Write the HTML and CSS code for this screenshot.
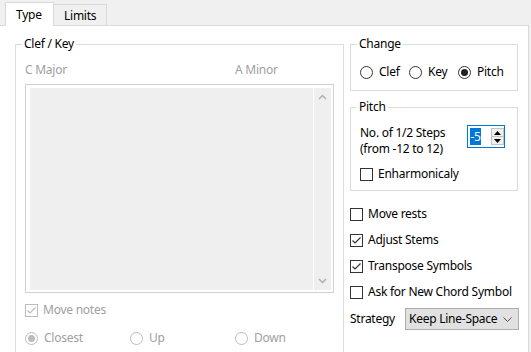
FILE: index.html
```html
<!DOCTYPE html>
<html>
<head>
<meta charset="utf-8">
<link rel="stylesheet" href="styles.css">
</head>
<body>
<div class="tabs">
  <div class="tab active">Type</div>
  <div class="tab">Limits</div>
</div>
<div class="page">
  <fieldset class="group clef">
    <legend>Clef / Key</legend>
    <div class="keys"><span>C Major</span><span>A Minor</span></div>
    <div class="listbox">
      <div class="list-area"></div>
      <div class="scrollbar">
        <svg width="9" height="6" viewBox="0 0 9 6"><path d="M1 5 L4.5 1.5 L8 5" fill="none" stroke="#b0b0b0" stroke-width="1.5"/></svg>
        <svg width="9" height="6" viewBox="0 0 9 6"><path d="M1 1 L4.5 4.5 L8 1" fill="none" stroke="#b0b0b0" stroke-width="1.5"/></svg>
      </div>
    </div>
    <div class="check disabled move-notes">
      <span class="box"><svg width="11" height="11" viewBox="0 0 11 11"><path d="M1.5 5.5 L4 8 L9.5 2.5" fill="none" stroke="#bcbcbc" stroke-width="1.2"/></svg></span>
      <span>Move notes</span>
    </div>
    <div class="dir-row disabled">
      <div class="radio-item"><span class="radio checked"><span class="dot"></span></span><span>Closest</span></div>
      <div class="radio-item"><span class="radio"></span><span>Up</span></div>
      <div class="radio-item"><span class="radio"></span><span>Down</span></div>
    </div>
  </fieldset>

  <div class="right">
    <fieldset class="group change">
      <legend>Change</legend>
      <div class="change-row">
        <div class="radio-item"><span class="radio"></span><span>Clef</span></div>
        <div class="radio-item"><span class="radio"></span><span>Key</span></div>
        <div class="radio-item"><span class="radio checked"><span class="dot"></span></span><span>Pitch</span></div>
      </div>
    </fieldset>

    <fieldset class="group pitch">
      <legend>Pitch</legend>
      <div class="steps">
        <div class="steps-text"><div>No. of 1/2 Steps</div><div>(from -12 to 12)</div></div>
        <div class="spin">
          <span class="sel">-5</span>
          <div class="spin-btns">
            <span class="spin-btn up"><svg width="7" height="4" viewBox="0 0 7 4"><path d="M3.5 0 L7 4 H0 Z" fill="#000"/></svg></span>
            <span class="spin-btn down"><svg width="7" height="4" viewBox="0 0 7 4"><path d="M0 0 H7 L3.5 4 Z" fill="#000"/></svg></span>
          </div>
        </div>
      </div>
      <div class="check enh">
        <span class="box"></span>
        <span>Enharmonicaly</span>
      </div>
    </fieldset>

    <div class="checks">
      <div class="check"><span class="box"></span><span>Move rests</span></div>
      <div class="check"><span class="box"><svg width="11" height="11" viewBox="0 0 11 11"><path d="M1.5 5.5 L4 8 L9.5 2.5" fill="none" stroke="#333" stroke-width="1.2"/></svg></span><span>Adjust Stems</span></div>
      <div class="check"><span class="box"><svg width="11" height="11" viewBox="0 0 11 11"><path d="M1.5 5.5 L4 8 L9.5 2.5" fill="none" stroke="#333" stroke-width="1.2"/></svg></span><span>Transpose Symbols</span></div>
      <div class="check"><span class="box"></span><span>Ask for New Chord Symbol</span></div>
    </div>

    <div class="strategy">
      <span>Strategy</span>
      <div class="select">
        <span>Keep Line-Space</span>
        <svg width="9" height="5" viewBox="0 0 9 5"><path d="M0.5 0.5 L4.5 4.5 L8.5 0.5" fill="none" stroke="#505050"/></svg>
      </div>
    </div>
  </div>
</div>
</body>
</html>
```

FILE: styles.css
```css
* { box-sizing: border-box; }

html, body {
  margin: 0;
}

body {
  width: 531px;
  height: 352px;
  overflow: hidden;
  background: #f0f0f0;
  font-family: "Noto Sans", sans-serif;
  font-size: 12px;
  line-height: 16px;
  letter-spacing: -0.25px;
  color: #000;
}

/* Tabs */
.tabs {
  display: flex;
  align-items: flex-end;
  height: 25px;
  padding-left: 5px;
}

.tab {
  border: 1px solid #d9d9d9;
  border-bottom: none;
  background: #f0f0f0;
  height: 21px;
  width: 54px;
  margin-left: -1px;
  padding: 3px 0 0 10px;
}

.tab.active {
  position: relative;
  z-index: 1;
  background: #fff;
  width: 49px;
  height: 24px;
  margin-left: 0;
  margin-bottom: -1px;
  padding-top: 4px;
}

/* Page */
.page {
  width: 529px;
  height: 327px;
  background: #fff;
  border-top: 1px solid #d9d9d9;
  border-right: 1px solid #d9d9d9;
  display: flex;
  align-items: flex-start;
  gap: 6px;
  padding: 10px 0 0 15px;
}

.group {
  margin: 0;
  min-width: 0;
  border: 1px solid #dcdcdc;
  padding: 0 9px;
}

.group > legend {
  padding: 0 2px;
  margin-left: -3px;
  line-height: 16px;
}

.clef {
  width: 329px;
  height: 340px;
}

.keys {
  display: grid;
  grid-template-columns: 210px auto;
  margin-top: 10px;
  color: #a0a0a0;
}

.listbox {
  margin-top: 6px;
  height: 209px;
  border: 1px solid #d0d0d0;
  padding: 3px 2px 2px 4px;
  display: flex;
  gap: 1px;
}

.list-area {
  flex: 1;
  background: #efefef;
}

.scrollbar {
  width: 17px;
  background: #efefef;
  display: flex;
  flex-direction: column;
  justify-content: space-between;
  align-items: center;
  padding: 6px 0 6px;
}

.scrollbar svg { display: block; }

/* Checkboxes */
.check {
  display: flex;
  align-items: center;
  gap: 5px;
  height: 16px;
}

.box {
  width: 13px;
  height: 13px;
  border: 1px solid #333;
  background: #fff;
  display: flex;
}

.box svg { display: block; }

.disabled { color: #a0a0a0; }
.disabled .box { border-color: #bcbcbc; }

.move-notes { margin-top: 9px; }

/* Radios */
.radio-item {
  display: flex;
  align-items: center;
  gap: 6px;
  height: 16px;
}

.radio {
  width: 13px;
  height: 13px;
  border: 1px solid #333;
  border-radius: 50%;
  background: #fff;
  display: flex;
  align-items: center;
  justify-content: center;
}

.radio .dot {
  width: 7px;
  height: 7px;
  border-radius: 50%;
  background: #222;
}

.disabled .radio { border-color: #bcbcbc; }
.disabled .radio .dot { background: #bcbcbc; }

.dir-row {
  display: grid;
  grid-template-columns: 105px 105px auto;
  margin-top: 12px;
}

/* Right column */
.right {
  width: 169px;
  display: flex;
  flex-direction: column;
}

.group.change {
  width: 168px;
  padding-bottom: 10px;
}

.change-row {
  display: grid;
  grid-template-columns: 49px 49px auto;
  margin-top: 12px;
}

.group.pitch {
  width: 168px;
  margin-top: 8px;
  padding-bottom: 8px;
}

.steps {
  display: flex;
  justify-content: space-between;
  align-items: flex-start;
  margin-top: 10px;
}

.steps-text { line-height: 16px; }

.spin {
  width: 38px;
  height: 23px;
  margin-right: 3px;
  border: 1px solid #0078d7;
  padding: 2px 0 2px 2px;
  display: flex;
  justify-content: space-between;
}

.sel {
  width: 11px;
  height: 17px;
  line-height: 17px;
  background: #0078d7;
  color: #fff;
  text-align: center;
}

.spin-btns {
  width: 13px;
  display: flex;
  flex-direction: column;
}

.spin-btn {
  display: flex;
  align-items: center;
  justify-content: center;
  background: #f0f0f0;
  border: 1px solid #c4c4c4;
}

.spin-btn.up { height: 9px; }
.spin-btn.down { height: 8px; border-top: none; }

.enh { margin-top: 9px; }

.checks {
  margin-top: 15px;
  display: flex;
  flex-direction: column;
  gap: 10px;
}

.strategy {
  margin-top: 8px;
  display: flex;
  align-items: center;
  justify-content: space-between;
}

.select {
  width: 114px;
  height: 22px;
  border: 1px solid #adadad;
  background: #e1e1e1;
  display: flex;
  align-items: center;
  justify-content: space-between;
  padding: 0 6px 0 3px;
}
```
